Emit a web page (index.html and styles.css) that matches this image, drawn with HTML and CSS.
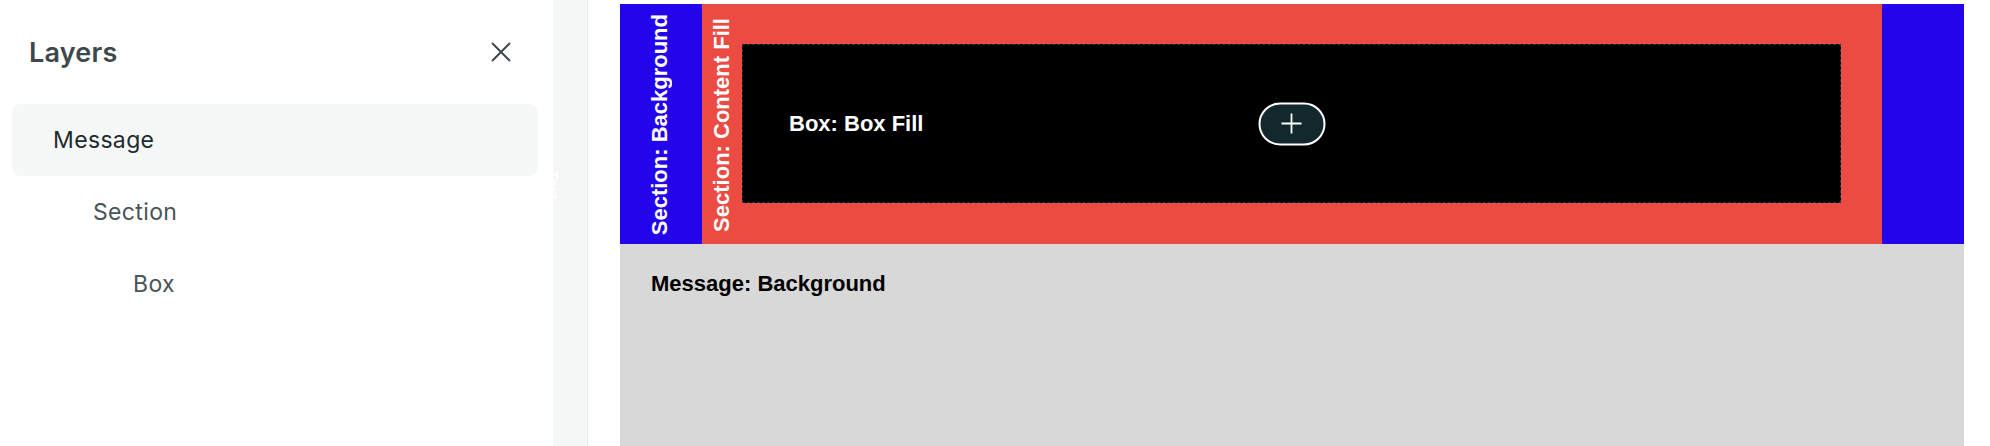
FILE: index.html
```html
<!DOCTYPE html>
<html>
<head>
<meta charset="utf-8">
<link rel="stylesheet" href="styles.css">
</head>
<body>
<aside class="sidebar">
  <header class="sidebar-head">
    <h1 class="sidebar-title">Layers</h1>
    <button class="close-btn" aria-label="Close">
      <svg width="20" height="20" viewBox="0 0 20 20"><path d="M1 1L19 19M19 1L1 19" stroke="#3e494d" stroke-width="2" fill="none"/></svg>
    </button>
  </header>
  <ul class="layer-list">
    <li class="layer layer-active lvl0">Message</li>
    <li class="layer lvl1">Section</li>
    <li class="layer lvl2">Box</li>
  </ul>
</aside>
<div class="strip"><span class="strip-tab">Text</span></div>
<main class="stage">
  <div class="message">
    <div class="section">
      <span class="vlabel vlabel-bg">Section: Background</span>
      <div class="content-fill">
        <span class="vlabel vlabel-fill">Section: Content Fill</span>
        <div class="box">
          <span class="box-label">Box: Box Fill</span>
          <button class="add-btn" aria-label="Add">
            <svg width="22" height="22" viewBox="0 0 22 22"><path d="M11 1V21M1 11H21" stroke="#ffffff" stroke-width="1.8" fill="none"/></svg>
          </button>
        </div>
      </div>
    </div>
    <div class="message-label">Message: Background</div>
  </div>
</main>
</body>
</html>
```

FILE: styles.css
```css
* { box-sizing: border-box; }
html, body { margin: 0; padding: 0; }
body {
  width: 1990px;
  height: 446px;
  overflow: hidden;
  display: flex;
  background: #ffffff;
  font-family: Inter, "Noto Sans", sans-serif;
}
.sidebar {
  width: 553px;
  flex: none;
  background: #ffffff;
  border-top-right-radius: 8px;
  padding: 0 0 0 12px;
}
.sidebar-head {
  height: 104px;
  display: flex;
  align-items: center;
  justify-content: space-between;
  padding: 0 42px 0 17px;
}
.sidebar-title {
  margin: 0;
  font-size: 27px;
  font-weight: 600;
  color: #3e484c;
  letter-spacing: 0.2px;
}
.close-btn {
  border: 0;
  background: none;
  padding: 0;
  width: 20px;
  height: 20px;
  display: flex;
}
.layer-list {
  list-style: none;
  margin: 0;
  padding: 0;
  width: 526px;
}
.layer {
  height: 72px;
  display: flex;
  align-items: center;
  font-size: 23px;
  color: #4a5458;
  border-radius: 8px;
  letter-spacing: 0.35px;
}
.layer-active {
  background: #f6f8f8;
  color: #1f2a2e;
}
.lvl0 { padding-left: 41px; }
.lvl1 { padding-left: 81px; }
.lvl2 { padding-left: 121px; }
.strip {
  width: 35px;
  flex: none;
  background: #f5f7f7;
  border-right: 1px solid #e9eded;
  position: relative;
}
.strip-tab {
  position: absolute;
  left: -8px;
  top: 170px;
  writing-mode: vertical-rl;
  color: #ffffff;
  font-family: "Liberation Sans", Arial, sans-serif;
  font-weight: 700;
  font-size: 15px;
}
.stage {
  flex: none;
  width: 1376px;
  padding: 4px 0 0 32px;
}
.message {
  width: 1344px;
  height: 442px;
  background: #d8d8d8;
  font-family: "Liberation Sans", Arial, sans-serif;
  font-weight: 700;
  font-size: 22px;
}
.section {
  position: relative;
  background: #2405eb;
  padding: 0 82px;
  height: 240px;
}
.content-fill {
  position: relative;
  background: #eb4b43;
  height: 240px;
  padding: 40px 41px 41px 40px;
}
.vlabel {
  position: absolute;
  writing-mode: vertical-rl;
  transform: rotate(180deg);
  color: #ffffff;
  line-height: 25px;
  white-space: nowrap;
}
.vlabel-bg { left: 27px; bottom: 9px; }
.vlabel-fill { left: 7px; bottom: 12px; }
.box {
  position: relative;
  height: 159px;
  background: #000000;
  border: 1px dashed #1e3a3e;
  display: flex;
  align-items: center;
  padding-left: 46px;
}
.box-label {
  color: #ffffff;
  line-height: 25px;
}
.add-btn {
  position: absolute;
  left: 50%;
  top: 50%;
  transform: translate(-50%, -50%);
  width: 67px;
  height: 43px;
  border-radius: 22px;
  border: 2px solid #ffffff;
  background: #12282c;
  padding: 0;
  display: flex;
  align-items: center;
  justify-content: center;
}
.message-label {
  padding: 27px 0 0 31px;
  color: #000000;
  line-height: 25px;
}
```
